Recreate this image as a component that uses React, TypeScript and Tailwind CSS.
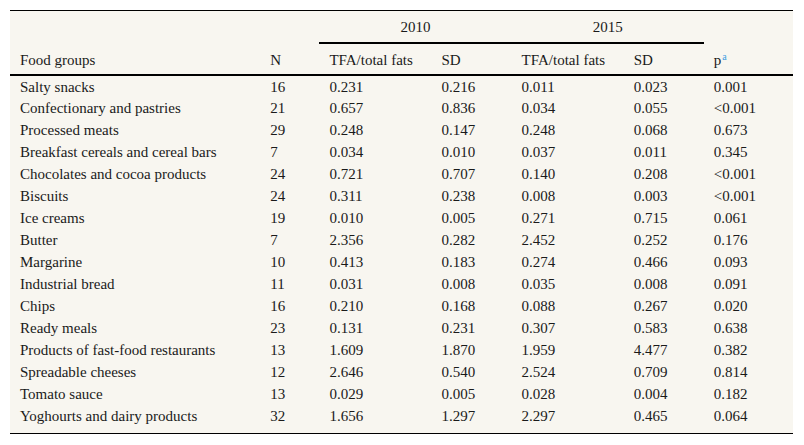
import React from "react";

type Row = [string, string, string, string, string, string, string];

const rows: Row[] = [
  ["Salty snacks", "16", "0.231", "0.216", "0.011", "0.023", "0.001"],
  ["Confectionary and pastries", "21", "0.657", "0.836", "0.034", "0.055", "<0.001"],
  ["Processed meats", "29", "0.248", "0.147", "0.248", "0.068", "0.673"],
  ["Breakfast cereals and cereal bars", "7", "0.034", "0.010", "0.037", "0.011", "0.345"],
  ["Chocolates and cocoa products", "24", "0.721", "0.707", "0.140", "0.208", "<0.001"],
  ["Biscuits", "24", "0.311", "0.238", "0.008", "0.003", "<0.001"],
  ["Ice creams", "19", "0.010", "0.005", "0.271", "0.715", "0.061"],
  ["Butter", "7", "2.356", "0.282", "2.452", "0.252", "0.176"],
  ["Margarine", "10", "0.413", "0.183", "0.274", "0.466", "0.093"],
  ["Industrial bread", "11", "0.031", "0.008", "0.035", "0.008", "0.091"],
  ["Chips", "16", "0.210", "0.168", "0.088", "0.267", "0.020"],
  ["Ready meals", "23", "0.131", "0.231", "0.307", "0.583", "0.638"],
  ["Products of fast-food restaurants", "13", "1.609", "1.870", "1.959", "4.477", "0.382"],
  ["Spreadable cheeses", "12", "2.646", "0.540", "2.524", "0.709", "0.814"],
  ["Tomato sauce", "13", "0.029", "0.005", "0.028", "0.004", "0.182"],
  ["Yoghourts and dairy products", "32", "1.656", "1.297", "2.297", "0.465", "0.064"],
];

const widths = ["w-[250px]", "w-[59px]", "w-[112px]", "w-[80px]", "w-[112px]", "w-[80px]", "w-[89px]"];

export default function App() {
  return (
    <div className="min-h-[445px] w-[804px] bg-white pt-[10px] pl-[10px] font-['Liberation_Serif'] text-[15px] leading-[18px] text-[#1a1a1a]">
      <div className="w-[783px] bg-[#f8f6f0] border-t border-black pb-[6px] border-b-[1.5px] border-b-black">
        <table className="w-[783px] table-fixed border-collapse">
          <colgroup>
            {widths.map((w, i) => (
              <col key={i} className={w} />
            ))}
          </colgroup>
          <thead>
            <tr className="h-[32px]">
              <th />
              <th />
              <th colSpan={2} className="border-b-2 border-black pt-[1px] text-center font-normal">
                2010
              </th>
              <th colSpan={2} className="border-b-2 border-black pt-[1px] text-center font-normal">
                2015
              </th>
              <th />
            </tr>
            <tr className="h-[32px] border-b-[2.5px] border-black">
              <th className="pl-[10px] pt-[2px] text-left font-normal">Food groups</th>
              <th className="pl-[10px] pt-[2px] text-left font-normal">N</th>
              <th className="pl-[10px] pt-[2px] text-left font-normal">TFA/total fats</th>
              <th className="pl-[10px] pt-[2px] text-left font-normal">SD</th>
              <th className="pl-[10px] pt-[2px] text-left font-normal">TFA/total fats</th>
              <th className="pl-[10px] pt-[2px] text-left font-normal">SD</th>
              <th className="pl-[10px] pt-[2px] text-left font-normal">
                p<sup className="ml-[1px] text-[10px] text-[#3f9de0]">a</sup>
              </th>
            </tr>
          </thead>
          <tbody>
            {rows.map((r) => (
              <tr key={r[0]} className="h-[22px]">
                {r.map((c, i) => (
                  <td key={i} className="pl-[10px] whitespace-nowrap">
                    {c}
                  </td>
                ))}
              </tr>
            ))}
          </tbody>
        </table>
      </div>
    </div>
  );
}
